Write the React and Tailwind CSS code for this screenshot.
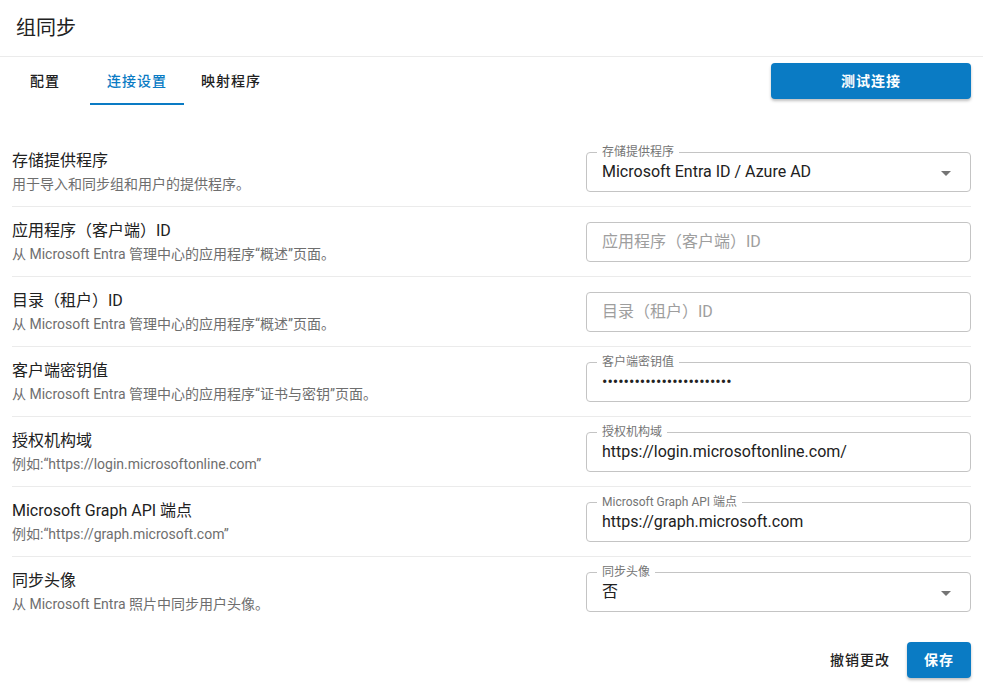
import React from "react";

const font = { fontFamily: 'Roboto, "Noto Sans CJK SC", sans-serif' };

function Caret() {
  return (
    <svg width="10" height="5" viewBox="0 0 10 5" className="absolute right-[19px] top-[18px]">
      <path d="M0 0 L5 5 L10 0 Z" fill="#757575" />
    </svg>
  );
}

function Field({ label, value, placeholder, select }) {
  return (
    <div className="relative h-[40px] rounded-[4px] border border-[#c4c4c4] flex items-center pl-[15px]">
      {label && (
        <span className="absolute left-[10px] top-[-9px] bg-white px-[5px] text-[12px] leading-[16px] text-[#757575]">
          {label}
        </span>
      )}
      {value ? (
        <span className="text-[16px] text-[#212121] leading-[24px]">{value}</span>
      ) : (
        <span className="text-[16px] text-[#9e9e9e] leading-[24px]">{placeholder}</span>
      )}
      {select && <Caret />}
    </div>
  );
}

const rows = [
  {
    title: "存储提供程序",
    sub: "用于导入和同步组和用户的提供程序。",
    field: { label: "存储提供程序", value: "Microsoft Entra ID / Azure AD", select: true },
  },
  {
    title: "应用程序（客户端）ID",
    sub: "从 Microsoft Entra 管理中心的应用程序“概述”页面。",
    field: { placeholder: "应用程序（客户端）ID" },
  },
  {
    title: "目录（租户）ID",
    sub: "从 Microsoft Entra 管理中心的应用程序“概述”页面。",
    field: { placeholder: "目录（租户）ID" },
  },
  {
    title: "客户端密钥值",
    sub: "从 Microsoft Entra 管理中心的应用程序“证书与密钥”页面。",
    field: { label: "客户端密钥值", value: "•".repeat(24) },
  },
  {
    title: "授权机构域",
    sub: "例如:“https://login.microsoftonline.com”",
    field: { label: "授权机构域", value: "https://login.microsoftonline.com/" },
  },
  {
    title: "Microsoft Graph API 端点",
    sub: "例如:“https://graph.microsoft.com”",
    field: { label: "Microsoft Graph API 端点", value: "https://graph.microsoft.com" },
  },
  {
    title: "同步头像",
    sub: "从 Microsoft Entra 照片中同步用户头像。",
    field: { label: "同步头像", value: "否", select: true },
  },
];

export default function App() {
  return (
    <div className="w-[983px] h-[689px] bg-white overflow-hidden" style={font}>
      <div className="h-[57px] border-b border-[#ebebeb] flex items-center pl-[16px]">
        <span className="text-[20px] text-[#212121] leading-[28px]">组同步</span>
      </div>
      <div className="flex items-center justify-between pr-[12px]">
        <div className="flex h-[48px]">
          <div className="relative min-w-[90px] px-[17px] flex items-center justify-center text-[14px] font-medium text-[#212121] tracking-[1px]">
            配置
          </div>
          <div className="relative min-w-[90px] px-[17px] flex items-center justify-center text-[14px] font-medium text-[#0a7bc4] tracking-[1px]">
            连接设置
            <div className="absolute left-0 right-0 bottom-0 h-[2px] bg-[#0a7bc4]" />
          </div>
          <div className="relative min-w-[90px] px-[17px] flex items-center justify-center text-[14px] font-medium text-[#212121] tracking-[1px]">
            映射程序
          </div>
        </div>
        <button className="w-[200px] h-[36px] rounded-[4px] bg-[#0a7bc4] text-white text-[14px] font-bold tracking-[1px] shadow-[0_2px_3px_rgba(0,0,0,0.25)]">
          测试连接
        </button>
      </div>
      <div className="mt-[32px] px-[12px]">
        {rows.map((r, i) => (
          <div
            key={i}
            className={
              "grid grid-cols-[574px_1fr] items-center h-[70px] " +
              (i < rows.length - 1 ? "border-b border-[#ebebeb]" : "")
            }
          >
            <div className="flex flex-col">
              <span className="text-[16px] leading-[22px] text-[#212121]">{r.title}</span>
              <span className="text-[14px] leading-[20px] text-[#6e6e6e] mt-[2px]">{r.sub}</span>
            </div>
            <Field {...r.field} />
          </div>
        ))}
      </div>
      <div className="flex justify-end items-center pr-[12px] mt-[15px] gap-[9px]">
        <button className="h-[36px] px-[8px] text-[14px] font-medium text-[#212121] tracking-[1px]">
          撤销更改
        </button>
        <button className="w-[64px] h-[36px] rounded-[4px] bg-[#0a7bc4] text-white text-[14px] font-bold tracking-[1px] shadow-[0_2px_3px_rgba(0,0,0,0.25)]">
          保存
        </button>
      </div>
    </div>
  );
}
